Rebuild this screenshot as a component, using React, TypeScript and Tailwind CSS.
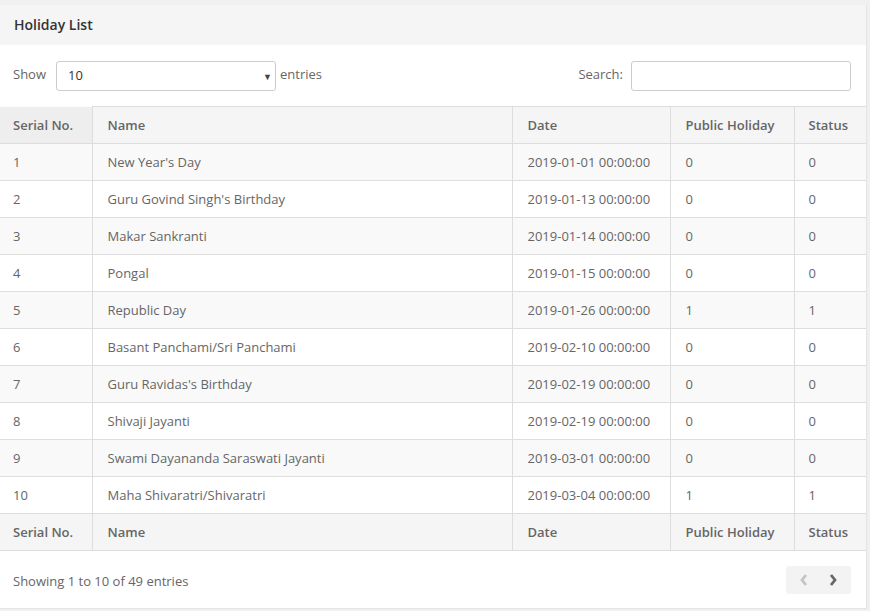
import React from "react";

const rows: [string, string, string, string, string][] = [
  ["1", "New Year's Day", "2019-01-01 00:00:00", "0", "0"],
  ["2", "Guru Govind Singh's Birthday", "2019-01-13 00:00:00", "0", "0"],
  ["3", "Makar Sankranti", "2019-01-14 00:00:00", "0", "0"],
  ["4", "Pongal", "2019-01-15 00:00:00", "0", "0"],
  ["5", "Republic Day", "2019-01-26 00:00:00", "1", "1"],
  ["6", "Basant Panchami/Sri Panchami", "2019-02-10 00:00:00", "0", "0"],
  ["7", "Guru Ravidas's Birthday", "2019-02-19 00:00:00", "0", "0"],
  ["8", "Shivaji Jayanti", "2019-02-19 00:00:00", "0", "0"],
  ["9", "Swami Dayananda Saraswati Jayanti", "2019-03-01 00:00:00", "0", "0"],
  ["10", "Maha Shivaratri/Shivaratri", "2019-03-04 00:00:00", "1", "1"],
];

function HeadRow() {
  return (
    <tr className="h-[37px] bg-[#f5f5f5] text-left font-semibold text-[#666]">
      <th className="w-[92px] border-b border-r border-[#ddd] bg-[#eeeeee] pl-[13px] pt-[2px] font-semibold">Serial No.</th>
      <th className="w-[420px] border border-[#ddd] pl-[15px] pt-[2px] font-semibold">Name</th>
      <th className="w-[158px] border border-[#ddd] pl-[15px] pt-[2px] font-semibold">Date</th>
      <th className="w-[124px] border border-[#ddd] pl-[15px] pt-[2px] font-semibold">Public Holiday</th>
      <th className="border border-r-0 border-[#ddd] pl-[14px] pt-[2px] font-semibold">Status</th>
    </tr>
  );
}

function FootRow() {
  return (
    <tr className="h-[37px] bg-[#f5f5f5] text-left font-semibold text-[#666]">
      <th className="w-[92px] border-b border-r border-[#ddd] pl-[13px] pt-[2px] font-semibold">Serial No.</th>
      <th className="border border-[#ddd] pl-[15px] pt-[2px] font-semibold">Name</th>
      <th className="border border-[#ddd] pl-[15px] pt-[2px] font-semibold">Date</th>
      <th className="border border-[#ddd] pl-[15px] pt-[2px] font-semibold">Public Holiday</th>
      <th className="border border-r-0 border-[#ddd] pl-[14px] pt-[2px] font-semibold">Status</th>
    </tr>
  );
}

export default function App() {
  return (
    <div
      className="min-h-[611px] w-[870px] bg-[#f0f0f0] pt-[5px] text-[13px] text-[#666]"
      style={{ fontFamily: '"Open Sans", "Liberation Sans", sans-serif' }}
    >
      <div className="w-[867px] border-r border-b border-[#e4e4e4] bg-white">
        <div className="flex h-[40px] items-center bg-[#f5f5f5] px-[14px] pb-[2px] text-[14px] font-semibold text-[#333]">
          Holiday List
        </div>
        <div className="flex h-[61px] items-start justify-between pt-[16px] pl-[13px] pr-[15px]">
          <div className="flex h-[30px] items-center">
            <span className="-mt-[2px]">Show</span>
            <div className="relative ml-[10px] flex h-[30px] w-[220px] items-center rounded-[3px] border border-[#ccc] bg-white pl-[11px] text-[13px] text-[#333]">
              10
              <span className="absolute right-[3px] top-[8px] text-[9px] text-[#444]">▼</span>
            </div>
            <span className="-mt-[2px] ml-[4px]">entries</span>
          </div>
          <div className="flex h-[30px] items-center">
            <span className="-mt-[2px]">Search:</span>
            <div className="ml-[8px] h-[30px] w-[220px] rounded-[3px] border border-[#ccc] bg-white" />
          </div>
        </div>
        <table className="w-[866px] table-fixed border-collapse text-[13px]">
          <thead>
            <HeadRow />
          </thead>
          <tbody>
            {rows.map((r, i) => (
              <tr key={r[0]} className={`h-[37px] ${i % 2 === 0 ? "bg-[#f9f9f9]" : "bg-white"}`}>
                <td className="border-b border-r border-[#ddd] pl-[13px] pt-[2px]">{r[0]}</td>
                <td className="border border-[#ddd] pl-[15px] pt-[2px]">{r[1]}</td>
                <td className="border border-[#ddd] pl-[15px] pt-[2px]">{r[2]}</td>
                <td className="border border-[#ddd] pl-[15px] pt-[2px]">{r[3]}</td>
                <td className="border border-r-0 border-[#ddd] pl-[14px] pt-[2px]">{r[4]}</td>
              </tr>
            ))}
          </tbody>
          <tfoot>
            <FootRow />
          </tfoot>
        </table>
        <div className="flex h-[57px] items-center justify-between pl-[13px] pr-[15px]">
          <span className="mt-[4px]">Showing 1 to 10 of 49 entries</span>
          <div className="flex h-[28px] w-[65px] items-center justify-around rounded-[3px] bg-[#f3f3f3] px-[4px]">
            <svg width="10" height="14" viewBox="0 0 10 14">
              <path d="M7 2 L3 7 L7 12" fill="none" stroke="#c4c4c4" strokeWidth="2.8" />
            </svg>
            <svg width="10" height="14" viewBox="0 0 10 14">
              <path d="M3 2 L7 7 L3 12" fill="none" stroke="#666" strokeWidth="2.8" />
            </svg>
          </div>
        </div>
      </div>
    </div>
  );
}
